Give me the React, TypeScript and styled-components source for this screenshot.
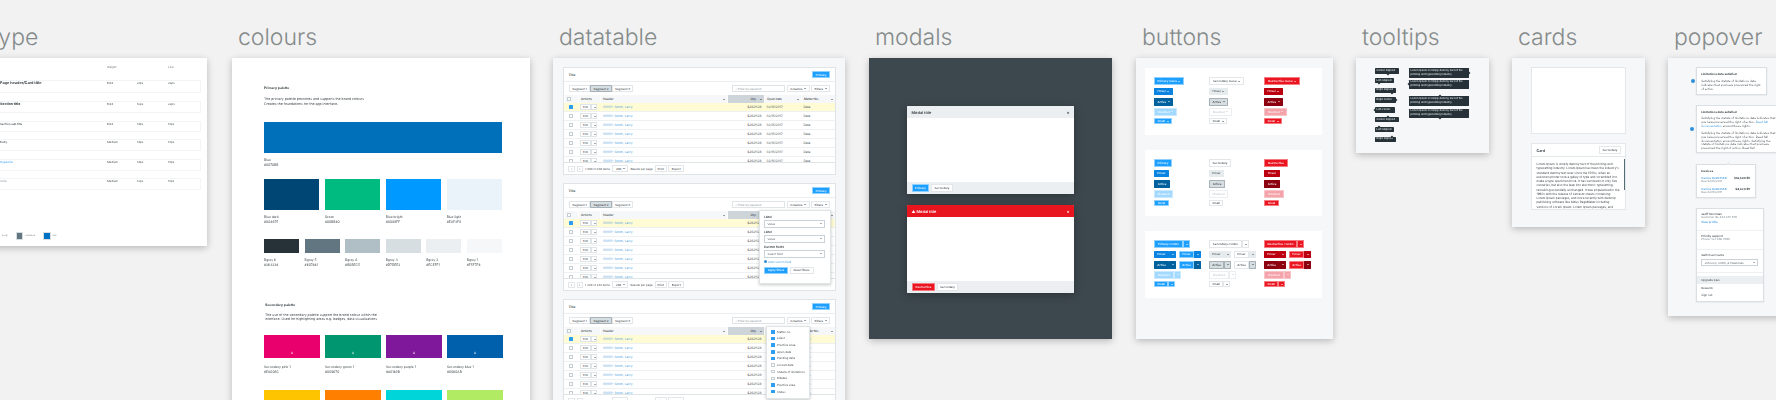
import styled, { createGlobalStyle, css } from "styled-components";

const GlobalStyle = createGlobalStyle`
  html, body {
    margin: 0;
    background: #f2f2f2;
    font-family: Inter, "Liberation Sans", sans-serif;
    text-rendering: geometricPrecision;
  }
  * { box-sizing: border-box; }
`;

const Canvas = styled.div`
  position: relative;
  width: 1776px;
  height: 400px;
  overflow: hidden;
  background: #f2f2f2;
`;

// each artboard sits at its own spot on the design canvas
const Artboard = styled.section<{ $x: number; $w: number }>`
  position: absolute;
  left: ${(p) => p.$x}px;
  top: 0;
  width: ${(p) => p.$w}px;
  display: flex;
  flex-direction: column;
`;

const BoardLabel = styled.h2`
  margin: 0;
  height: 58px;
  padding: 23px 0 0 6px;
  font-size: 23px;
  line-height: 29px;
  font-weight: 300;
  color: #858b8b;
  white-space: nowrap;
`;

const Frame = styled.div<{ $h: number; $bg?: string }>`
  position: relative;
  height: ${(p) => p.$h}px;
  background: ${(p) => p.$bg ?? "#f5f7f8"};
  box-shadow: 0 2px 7px rgba(0, 0, 0, 0.24);
`;

// the reference is a zoomed-out canvas, so everything inside a frame is a bit soft
const Soft = styled.div`
  height: 100%;
  filter: blur(0.25px);
`;

/* ---------- shared bits ---------- */

const tiny = css`
  font-size: 2.9px;
  line-height: 4px;
  color: #40484c;
  white-space: nowrap;
`;

const Caret = styled.i<{ $color?: string }>`
  display: inline-block;
  width: 0;
  height: 0;
  margin-left: 1.5px;
  border-left: 1.2px solid transparent;
  border-right: 1.2px solid transparent;
  border-top: 1.5px solid ${(p) => p.$color ?? "currentColor"};
`;

type Kind = "primary" | "secondary" | "destructive";
type State = "normal" | "hover" | "active" | "disabled";

const palette: Record<Kind, Record<State, [string, string, string]>> = {
  primary: {
    normal: ["#1c9fff", "#ffffff", "#8fd0ff"],
    hover: ["#0a84e0", "#ffffff", "#0a84e0"],
    active: ["#00619f", "#ffffff", "#00619f"],
    disabled: ["#a3d9ff", "#f2faff", "#c9e9ff"],
  },
  secondary: {
    normal: ["#ffffff", "#3f474b", "#e3e7ea"],
    hover: ["#e6ebee", "#3f474b", "#e6ebee"],
    active: ["#d7dee2", "#343c40", "#a7b2b8"],
    disabled: ["#ffffff", "#c5ccd0", "#eceff1"],
  },
  destructive: {
    normal: ["#ea1520", "#ffffff", "#f47a80"],
    hover: ["#bd0010", "#ffffff", "#bd0010"],
    active: ["#8c0010", "#ffffff", "#8c0010"],
    disabled: ["#f3a3a9", "#fff0f0", "#f7c5c8"],
  },
};

const Btn = styled.span<{ $kind: Kind; $state?: State; $w: number; $h?: number }>`
  display: inline-flex;
  flex: none;
  align-items: center;
  justify-content: center;
  width: ${(p) => p.$w}px;
  height: ${(p) => p.$h ?? 7.5}px;
  font-size: 2.9px;
  font-weight: 500;
  white-space: nowrap;
  border-radius: 0.4px;
  background: ${(p) => palette[p.$kind][p.$state ?? "normal"][0]};
  color: ${(p) => palette[p.$kind][p.$state ?? "normal"][1]};
  border: 0.6px solid ${(p) => palette[p.$kind][p.$state ?? "normal"][2]};
`;

/* ---------- type ---------- */

const TypeHead = styled.div`
  display: grid;
  grid-template-columns: 107px 30px 31px 33px;
  padding: 7px 0 0 15px;
  height: 22px;
  & > span {
    ${tiny}
    color: #6c767b;
  }
`;

const TypeRow = styled.div<{ $h: number; $next: number }>`
  display: grid;
  grid-template-columns: 107px 30px 31px 33px;
  width: 216px;
  height: ${(p) => p.$h}px;
  margin-bottom: ${(p) => p.$next - p.$h}px;
  margin-left: -15px;
  padding-left: 15px;
  border: 0.5px solid #f2f4f5;
  border-left: 0;
  & > span {
    ${tiny}
  }
`;

const TypeSample = styled.span<{ $size: number; $weight: number; $color?: string }>`
  font-size: ${(p) => p.$size}px !important;
  font-weight: ${(p) => p.$weight};
  color: ${(p) => p.$color ?? "#30393d"} !important;
`;

const TypeRows = styled.div`
  padding-left: 15px;
  height: 152px;
`;

const Legend = styled.div`
  display: flex;
  align-items: center;
  padding-left: 11px;
  gap: 2px;
`;

const LegendChip = styled.i<{ $color: string; $w?: number; $ml?: number }>`
  width: ${(p) => p.$w ?? 7.5}px;
  height: 7.5px;
  background: ${(p) => p.$color};
  border: 0.5px solid #d7dee2;
  margin-left: ${(p) => p.$ml ?? 6}px;
`;

const LegendText = styled.span`
  ${tiny}
  font-size: 2.4px;
  color: #7d878c;
`;

/* ---------- colours ---------- */

const ColourBody = styled.div`
  padding: 28px 28px 0 32px;
`;

const SectionTitle = styled.h3<{ $mt?: number; $pl?: number }>`
  margin: ${(p) => p.$mt ?? 0}px 0 0 0;
  padding-left: ${(p) => p.$pl ?? 0}px;
  font-size: 3.4px;
  line-height: 4px;
  font-weight: 700;
  color: #30393d;
  white-space: nowrap;
`;

const Blurb = styled.p<{ $mt: number; $pl?: number }>`
  margin: ${(p) => p.$mt}px 0 0 0;
  padding-left: ${(p) => p.$pl ?? 0}px;
  font-size: 3.45px;
  line-height: 4.6px;
  color: #40484c;
  white-space: nowrap;
`;

const Swatches = styled.div<{ $cols: number; $gap: number; $mt: number; $w?: number }>`
  display: grid;
  grid-template-columns: repeat(${(p) => p.$cols}, 1fr);
  column-gap: ${(p) => p.$gap}px;
  margin-top: ${(p) => p.$mt}px;
  width: ${(p) => (p.$w ? `${p.$w}px` : "auto")};
`;

const Chip = styled.div<{ $color: string; $h: number }>`
  display: flex;
  align-items: flex-end;
  justify-content: center;
  height: ${(p) => p.$h}px;
  padding-bottom: 3px;
  background: ${(p) => p.$color};
  font-size: 3px;
  line-height: 4px;
  color: #fff;
`;

const Caption = styled.div<{ $mt: number }>`
  margin-top: ${(p) => p.$mt}px;
  font-size: 3.3px;
  line-height: 5px;
  color: #40484c;
  white-space: nowrap;
`;

function Swatch({ name, hex, color, h, mt, mark }: { name: string; hex: string; color: string; h: number; mt: number; mark?: boolean }) {
  return (
    <div>
      <Chip $color={color} $h={h}>{mark ? "A" : ""}</Chip>
      <Caption $mt={mt}>{name}<br />{hex}</Caption>
    </div>
  );
}

const main = [
  ["Blue dark", "#004675", "#004675"],
  ["Green", "#00BB80", "#00bb80"],
  ["Blue bright", "#0099FF", "#0099ff"],
  ["Blue light", "#EAF3F9", "#eaf3f9"],
];
const greys = [
  ["Bgrey 6", "#263238", "#263238"],
  ["Bgrey 5", "#607881", "#617680"],
  ["Bgrey 4", "#B0BEC5", "#b0bec5"],
  ["Bgrey 3", "#D7DEE2", "#d7dee2"],
  ["Bgrey 2", "#ECEFF1", "#eceff1"],
  ["Bgrey 1", "#F5F7F8", "#f5f7f8"],
];
const secondary = [
  ["Secondary pink 1", "#EA006C", "#ea006c"],
  ["Secondary green 1", "#009670", "#009670"],
  ["Secondary purple 1", "#80189B", "#80189b"],
  ["Secondary blue 1", "#0060AB", "#0060ab"],
];
const secondaryTwo = [
  ["Secondary yellow 1", "#FFC400", "#ffc400"],
  ["Secondary orange 1", "#FF7F00", "#ff7f00"],
  ["Secondary cyan 1", "#00D5D9", "#00d5d9"],
  ["Secondary lime 1", "#B0EB63", "#b0eb63"],
];

/* ---------- datatable ---------- */

const TablePanels = styled.div`
  display: flex;
  flex-direction: column;
  gap: 8px;
  padding: 9px 9px 0 10px;
`;

const Panel = styled.div`
  position: relative;
  height: 108px;
  flex: none;
  background: #fff;
  border: 0.5px solid #dfe4e7;
  display: flex;
  flex-direction: column;
`;

const PanelHead = styled.div`
  display: flex;
  align-items: center;
  justify-content: space-between;
  height: 14px;
  flex: none;
  padding: 0 5px 0 4.5px;
  border-bottom: 0.5px solid #eceff1;
  font-size: 3.2px;
  font-weight: 600;
  color: #30393d;
`;

const Toolbar = styled.div`
  display: flex;
  align-items: center;
  gap: 1.3px;
  height: 13px;
  flex: none;
  padding: 0 5px;
`;

const Segmented = styled.div`
  display: flex;
  gap: 0;
  margin-right: auto;
`;

const SearchBox = styled.div`
  display: flex;
  align-items: center;
  gap: 1px;
  width: 53px;
  height: 7.5px;
  padding: 0 2px;
  border: 0.6px solid #dfe4e7;
  font-size: 2.9px;
  color: #8a959b;
`;

const columns = "14px 22px 127px 37px 37px 1fr";

const TableHeadRow = styled.div`
  display: grid;
  grid-template-columns: ${columns};
  height: 8px;
  flex: none;
  align-items: center;
  background: #f5f7f8;
  font-size: 3px;
  font-weight: 500;
  color: #3f474b;
`;

const HeadCell = styled.div<{ $sorted?: boolean; $right?: boolean }>`
  display: flex;
  align-items: center;
  justify-content: ${(p) => (p.$right ? "flex-end" : "space-between")};
  gap: 2px;
  height: 100%;
  padding: 0 2px;
  border-left: 0.5px solid #fff;
  background: ${(p) => (p.$sorted ? "#cdd5da" : "transparent")};
`;

const TableBody = styled.div`
  flex: 1;
  overflow: hidden;
`;

const TableRow = styled.div<{ $on?: boolean }>`
  display: grid;
  grid-template-columns: ${columns};
  height: 9px;
  align-items: center;
  background: ${(p) => (p.$on ? "#fffbd4" : "#fff")};
  border-bottom: 0.5px solid #eef1f2;
  ${tiny}
  line-height: 8px;
  font-size: 3.15px;
`;

const Tick = styled.i<{ $on?: boolean; $size?: number }>`
  display: block;
  justify-self: center;
  flex: none;
  width: ${(p) => p.$size ?? 4.5}px;
  height: ${(p) => p.$size ?? 4.5}px;
  border-radius: 0.5px;
  background: ${(p) => (p.$on ? "#2f9df0" : "#fff")};
  border: 0.5px solid ${(p) => (p.$on ? "#2f9df0" : "#c3ccd1")};
`;

const Split = styled.div`
  display: flex;
  margin-left: 2px;
`;

const SplitPart = styled.span<{ $w: number }>`
  display: flex;
  align-items: center;
  justify-content: center;
  width: ${(p) => p.$w}px;
  height: 5.5px;
  background: #fff;
  border: 0.5px solid #dfe4e7;
  font-size: 2.8px;
  color: #3f474b;
`;

const LinkCell = styled.span`
  padding-left: 3px;
  color: #3c9ddd;
`;

const Cell = styled.span<{ $right?: boolean }>`
  padding: 0 2.5px;
  text-align: ${(p) => (p.$right ? "right" : "left")};
`;

const TableFooter = styled.div`
  display: flex;
  align-items: center;
  gap: 1.5px;
  height: 12px;
  flex: none;
  padding: 0 4px;
  border-top: 0.5px solid #dfe4e7;
  font-size: 2.8px;
  color: #40484c;
`;

const FooterText = styled.span<{ $mx: number }>`
  margin: 0 ${(p) => p.$mx}px;
  white-space: nowrap;
`;

const Pop = styled.div<{ $right: number; $top: number; $w: number; $h: number; $pad: string }>`
  position: absolute;
  right: ${(p) => p.$right}px;
  top: ${(p) => p.$top}px;
  width: ${(p) => p.$w}px;
  height: ${(p) => p.$h}px;
  padding: ${(p) => p.$pad};
  background: #fff;
  border: 0.5px solid #dfe4e7;
  box-shadow: 0 1px 3px rgba(0, 0, 0, 0.22);
  display: flex;
  flex-direction: column;
`;

const FieldLabel = styled.label`
  font-size: 3px;
  line-height: 4px;
  font-weight: 600;
  color: #30393d;
`;

const Select = styled.div<{ $mb: number }>`
  display: flex;
  align-items: center;
  justify-content: space-between;
  height: 7.5px;
  margin: 1.5px 0 ${(p) => p.$mb}px;
  padding: 0 2.5px;
  border: 0.5px solid #c9d2d7;
  font-size: 2.9px;
  color: #5c666b;
  white-space: nowrap;
`;

const AddLink = styled.span`
  display: flex;
  align-items: center;
  gap: 1px;
  font-size: 2.9px;
  line-height: 4px;
  color: #3c9ddd;
  margin-bottom: 3px;
`;

const Bullet = styled.i`
  width: 3px;
  height: 3px;
  border-radius: 50%;
  background: #2f8fd8;
`;

const PopActions = styled.div`
  display: flex;
  gap: 1.5px;
`;

const ColumnOption = styled.div`
  display: flex;
  align-items: center;
  gap: 2.5px;
  height: 6.65px;
  font-size: 2.9px;
  color: #40484c;
  white-space: nowrap;
`;

const rowIndexes = [0, 1, 2, 3, 4, 5, 6];

function DataPanel({ children }: { children?: React.ReactNode }) {
  return (
    <Panel>
      <PanelHead>
        Title
        <Btn $kind="primary" $w={18}>Primary</Btn>
      </PanelHead>
      <Toolbar>
        <Segmented>
          <Btn $kind="secondary" $w={21}>Segment 1</Btn>
          <Btn $kind="secondary" $state="active" $w={22}>Segment 2</Btn>
          <Btn $kind="secondary" $w={21}>Segment 3</Btn>
        </Segmented>
        <SearchBox>⌕ Filter by keyword</SearchBox>
        <Btn $kind="secondary" $w={23}>Columns<Caret /></Btn>
        <Btn $kind="secondary" $w={19}>Filters<Caret /></Btn>
      </Toolbar>
      <TableHeadRow>
        <HeadCell><Tick $size={4} /></HeadCell>
        <HeadCell>Actions</HeadCell>
        <HeadCell>Header<Caret /></HeadCell>
        <HeadCell $sorted $right>Qty.<Caret /></HeadCell>
        <HeadCell>Open date<Caret /></HeadCell>
        <HeadCell>Matter No.<Caret /></HeadCell>
      </TableHeadRow>
      <TableBody>
        {rowIndexes.map((i) => (
          <TableRow key={i} $on={i === 0}>
            <Tick $on={i === 0} />
            <Split>
              <SplitPart $w={11}>Edit</SplitPart>
              <SplitPart $w={6}><Caret $color="#4b5458" /></SplitPart>
            </Split>
            <LinkCell>00001- Smith, Larry</LinkCell>
            <Cell $right>$2621123</Cell>
            <Cell>02/15/2017</Cell>
            <Cell>Data</Cell>
          </TableRow>
        ))}
      </TableBody>
      <TableFooter>
        <Btn $kind="secondary" $w={7} $h={6}>‹</Btn>
        <Btn $kind="secondary" $w={6} $h={6}>›</Btn>
        <FooterText $mx={1}>1-200 of 238 items</FooterText>
        <Btn $kind="secondary" $w={16} $h={7}>200<Caret /></Btn>
        <FooterText $mx={0.5}>Results per page</FooterText>
        <Btn $kind="secondary" $w={12} $h={7}>Print</Btn>
        <Btn $kind="secondary" $w={16} $h={7}>Export</Btn>
      </TableFooter>
      {children}
    </Panel>
  );
}

const columnOptions: [string, boolean][] = [
  ["Matter no.", true],
  ["Client", true],
  ["Practice Area", true],
  ["Open date", true],
  ["Pending date", true],
  ["Closed date", false],
  ["Statute of limitations", false],
  ["Billable", false],
  ["Practice area", true],
  ["Status", true],
];

/* ---------- modals ---------- */

const ModalStack = styled.div`
  display: flex;
  flex-direction: column;
  align-items: center;
  gap: 11px;
  padding-top: 48px;
`;

const Modal = styled.div`
  display: flex;
  flex-direction: column;
  width: 167px;
  height: 88px;
  background: #fff;
  border-radius: 1px;
  overflow: hidden;
  box-shadow: 0 2px 10px rgba(0, 0, 0, 0.3);
`;

const ModalHead = styled.div<{ $danger?: boolean }>`
  display: flex;
  align-items: center;
  gap: 2px;
  height: 12px;
  padding: 0 4.5px;
  font-size: 3.9px;
  font-weight: 600;
  color: ${(p) => (p.$danger ? "#fff" : "#30393d")};
  background: ${(p) => (p.$danger ? "#e8151f" : "#eceff1")};
`;

const ModalClose = styled.span`
  margin-left: auto;
  font-size: 4px;
  font-weight: 700;
`;

const ModalBody = styled.div`
  flex: 1;
`;

const ModalFoot = styled.div`
  display: flex;
  align-items: center;
  gap: 2px;
  height: 12px;
  padding: 0 5px;
  background: #eceff1;
`;

/* ---------- buttons ---------- */

const ButtonBoard = styled.div`
  display: flex;
  flex-direction: column;
  gap: 15px;
  padding: 10px 11px 0 9px;
`;

const ButtonSheet = styled.div`
  display: grid;
  grid-template-columns: 55px 55px 1fr;
  height: 66.5px;
  padding: 9px 0 0 9px;
  background: #fff;
`;

const ButtonCol = styled.div`
  display: flex;
  flex-direction: column;
  align-items: flex-start;
  gap: 2.5px;
`;

const ComboRow = styled.div`
  display: flex;
  gap: 3px;
`;

const Combo = styled.div`
  display: flex;
`;

const menuRows: [State | undefined, string, number, number][] = [
  [undefined, "menu", 0, 8],
  ["hover", "Hover", 19, 7.5],
  ["active", "Active", 19, 8],
  ["disabled", "Disabled", 23, 7.5],
  [undefined, "Small", 18, 6],
];

const menuWidth: Record<Kind, number> = { primary: 30, secondary: 35, destructive: 36 };
const menuTitle: Record<Kind, string> = { primary: "Primary menu", secondary: "Secondary menu", destructive: "Destructive menu" };

const plainWidths: Record<Kind, number[]> = {
  primary: [18, 15, 16, 19, 15],
  secondary: [22, 15, 16, 19, 14],
  destructive: [24, 16, 16, 20, 15],
};
const plainTitle: Record<Kind, string> = { primary: "Primary", secondary: "Secondary", destructive: "Destructive" };
const comboTitle: Record<Kind, string> = { primary: "Primary combo", secondary: "Secondary combo", destructive: "Destructive combo" };
const comboWidth: Record<Kind, number> = { primary: 29, secondary: 33, destructive: 33 };
const kinds: Kind[] = ["primary", "secondary", "destructive"];

function ComboBtn({ kind, label, w, state, tail, h }: { kind: Kind; label: string; w: number; state?: State; tail?: State; h?: number }) {
  return (
    <Combo>
      <Btn $kind={kind} $state={state} $w={w} $h={h}>{label}</Btn>
      <Btn $kind={kind} $state={tail ?? state} $w={7} $h={h}><Caret /></Btn>
    </Combo>
  );
}

/* ---------- tooltips ---------- */

const TipBoard = styled.div`
  display: flex;
  padding: 10px 0 0 19px;
`;

const TipCol = styled.div<{ $w: number; $gap: number }>`
  display: flex;
  flex-direction: column;
  align-items: flex-start;
  gap: ${(p) => p.$gap}px;
  width: ${(p) => p.$w}px;
`;

type Arrow = "bc" | "bl" | "br" | "r" | "l" | "tc" | "tl" | "tr";

const arrowPlace: Record<Arrow, string> = {
  bc: "left: 50%; bottom: -1px;",
  bl: "left: 3px; bottom: -1px;",
  br: "right: 3px; bottom: -1px;",
  r: "right: -1px; top: calc(50% - 1px);",
  l: "left: -1px; top: calc(50% - 1px);",
  tc: "left: 50%; top: -1px;",
  tl: "left: 3px; top: -1px;",
  tr: "right: 3px; top: -1px;",
};

const Tip = styled.div<{ $arrow: Arrow; $w: number; $h: number; $mt?: number }>`
  position: relative;
  width: ${(p) => p.$w}px;
  height: ${(p) => p.$h}px;
  margin-top: ${(p) => p.$mt ?? 0}px;
  padding: 0.8px 1.5px;
  background: #263238;
  border-radius: 0.4px;
  color: #f2f5f6;
  font-size: 2.7px;
  line-height: 3.9px;
  white-space: nowrap;
  &::after {
    content: "";
    position: absolute;
    width: 2px;
    height: 2px;
    background: #263238;
    transform: rotate(45deg);
    ${(p) => arrowPlace[p.$arrow]}
  }
`;

const shortTips: [string, Arrow, number][] = [
  ["Center aligned", "bc", 24],
  ["Left aligned", "bl", 19],
  ["Right aligned", "br", 21],
  ["Right center", "r", 21],
  ["Left center", "l", 20],
  ["Center aligned", "tc", 24],
  ["Left aligned", "tl", 19],
  ["Right aligned", "tr", 21],
];

const lorem = "Lorem Ipsum is simply dummy text of the";
const lorem2 = "printing and typesetting industry.";

/* ---------- cards ---------- */

const CardStack = styled.div`
  display: flex;
  flex-direction: column;
  gap: 9px;
  padding: 9px 19px 0;
`;

const Card = styled.div<{ $h: number }>`
  position: relative;
  display: flex;
  flex-direction: column;
  height: ${(p) => p.$h}px;
  background: #fff;
  border: 0.5px solid #e3e8ea;
  overflow: hidden;
`;

const CardHead = styled.div`
  display: flex;
  flex: none;
  align-items: center;
  justify-content: space-between;
  height: 13px;
  padding: 0 4px 0 4.5px;
  border-bottom: 0.5px solid #e3e8ea;
  font-size: 3.7px;
  font-weight: 600;
  color: #30393d;
`;

const CardText = styled.p`
  margin: 0;
  padding: 5px 5px 0 4.5px;
  font-size: 3px;
  line-height: 4.25px;
  color: #353d41;
`;

const ScrollThumb = styled.i`
  position: absolute;
  right: 0.2px;
  top: 15px;
  width: 1.2px;
  height: 31px;
  background: #566a74;
`;

/* ---------- popovers ---------- */

const PopStack = styled.div`
  display: flex;
  flex-direction: column;
  align-items: flex-start;
  gap: 10.3px;
  padding: 9px 0 0 27.7px;
`;

const PopCard = styled.div<{ $w: number; $h: number }>`
  position: relative;
  width: ${(p) => p.$w}px;
  height: ${(p) => p.$h}px;
  background: #fff;
  border: 0.6px solid #d9dfe3;
  box-shadow: 0 0.5px 1.5px rgba(0, 0, 0, 0.12);
`;

const PopInner = styled.div<{ $h?: number }>`
  height: ${(p) => (p.$h ? `${p.$h}px` : "auto")};
  overflow: hidden;
  padding: 4px 4.5px 0;
`;

const PopTitle = styled.div<{ $mb?: number; $weight?: number }>`
  font-size: 2.9px;
  line-height: 4px;
  font-weight: ${(p) => p.$weight ?? 700};
  color: #30393d;
  margin-bottom: ${(p) => p.$mb ?? 0}px;
  white-space: nowrap;
`;

const PopText = styled.p<{ $w: number; $mb?: number }>`
  margin: 0 0 ${(p) => p.$mb ?? 0}px;
  width: ${(p) => p.$w}px;
  font-size: 2.95px;
  line-height: 3.75px;
  color: #40484c;
`;

const InlineLink = styled.span`
  color: #2f8fd8;
`;

const Dot = styled.i<{ $left: number }>`
  position: absolute;
  left: ${(p) => p.$left}px;
  top: calc(50% - 2px);
  width: 4px;
  height: 4px;
  border-radius: 50%;
  background: #2f8fd8;
`;

const PopNotch = styled.i`
  position: absolute;
  left: 30px;
  top: -1.2px;
  width: 2.4px;
  height: 2.4px;
  background: #fff;
  border-left: 0.5px solid #d9dfe3;
  border-top: 0.5px solid #d9dfe3;
  transform: rotate(45deg);
`;

const InvoiceRow = styled.div`
  display: flex;
  justify-content: space-between;
  padding-top: 3px;
`;

const InvoiceLink = styled.div`
  font-size: 2.9px;
  line-height: 4px;
  font-weight: 500;
  color: #2f8fd8;
`;

const Muted = styled.div`
  font-size: 2.85px;
  line-height: 3.9px;
  color: #7d878c;
`;

const Amount = styled.span`
  font-size: 2.9px;
  line-height: 4px;
  font-weight: 700;
  color: #30393d;
`;

const PopSection = styled.div<{ $h: number }>`
  height: ${(p) => p.$h}px;
  padding: 3.5px 4.5px 0;
  border-bottom: 0.5px solid #eef1f2;
`;

const MenuItem = styled.div<{ $on?: boolean }>`
  height: 7.6px;
  padding: 0 4.5px;
  display: flex;
  align-items: center;
  font-size: 2.9px;
  color: #353d41;
  background: ${(p) => (p.$on ? "#eceff1" : "transparent")};
`;

const MenuList = styled.div`
  padding-top: 3.6px;
`;

/* ---------- page ---------- */

const satis = "Satisfying the statute of limitations data indicates that you have preserved the right of action.";

export default function App() {
  return (
    <Canvas>
      <GlobalStyle />

      <Artboard $x={-15} $w={222}>
        <BoardLabel>type</BoardLabel>
        <Frame $h={188} $bg="#fff">
          <Soft>
            <TypeHead><span /><span>Weight</span><span /><span>Line</span></TypeHead>
            <TypeRows>
              <TypeRow $h={13} $next={21}><TypeSample $size={3.8} $weight={700}>Page header/Card title</TypeSample><span>Bold</span><span>21px</span><span>26px</span></TypeRow>
              <TypeRow $h={12} $next={20}><TypeSample $size={3.5} $weight={700}>Section title</TypeSample><span>Bold</span><span>16px</span><span>22px</span></TypeRow>
              <TypeRow $h={11} $next={18}><TypeSample $size={2.9} $weight={500}>Section sub title</TypeSample><span>Bold</span><span>14px</span><span>18px</span></TypeRow>
              <TypeRow $h={12} $next={20}><TypeSample $size={2.9} $weight={400}>Body</TypeSample><span>Medium</span><span>14px</span><span>18px</span></TypeRow>
              <TypeRow $h={12} $next={19}><TypeSample $size={2.9} $weight={400} $color="#2f9df0">Hyperlink</TypeSample><span>Medium</span><span>14px</span><span>18px</span></TypeRow>
              <TypeRow $h={12} $next={19}><TypeSample $size={2.6} $weight={400} $color="#8a959b">Small</TypeSample><span>Medium</span><span>12px</span><span>18px</span></TypeRow>
            </TypeRows>
            <Legend>
              <LegendChip $color="#fff" $w={4} $ml={0} />
              <LegendText>body</LegendText>
              <LegendChip $color="#617680" />
              <LegendText>subdued</LegendText>
              <LegendChip $color="#0073c4" />
              <LegendText>link</LegendText>
            </Legend>
          </Soft>
        </Frame>
      </Artboard>

      <Artboard $x={232} $w={298}>
        <BoardLabel>colours</BoardLabel>
        <Frame $h={500} $bg="#fff">
          <Soft>
            <ColourBody>
              <SectionTitle>Primary palette</SectionTitle>
              <Blurb $mt={7}>The primary palette promotes and supports the brand colours<br />Creates the foundations for the app interface.</Blurb>
              <Swatches $cols={1} $gap={0} $mt={16}>
                <Swatch name="Blue" hex="#0070BB" color="#0070bb" h={30.5} mt={5} />
              </Swatches>
              <Swatches $cols={4} $gap={5.5} $mt={11}>
                {main.map(([n, x, c]) => <Swatch key={n} name={n} hex={x} color={c} h={31} mt={5} />)}
              </Swatches>
              <Swatches $cols={6} $gap={5.3} $mt={14}>
                {greys.map(([n, x, c]) => <Swatch key={n} name={n} hex={x} color={c} h={14} mt={5} />)}
              </Swatches>
              <SectionTitle $mt={35} $pl={1}>Secondary palette</SectionTitle>
              <Blurb $mt={6} $pl={1}>The use of the secondary palette support the brand colour within the<br />interface. Used for highlighting areas e.g. badges, data visualisations</Blurb>
              <Swatches $cols={4} $gap={5} $mt={13} $w={239}>
                {secondary.map(([n, x, c]) => <Swatch key={n} name={n} hex={x} color={c} h={23} mt={7} mark />)}
              </Swatches>
              <Swatches $cols={4} $gap={5} $mt={15} $w={239}>
                {secondaryTwo.map(([n, x, c]) => <Swatch key={n} name={n} hex={x} color={c} h={23} mt={7} />)}
              </Swatches>
            </ColourBody>
          </Soft>
        </Frame>
      </Artboard>

      <Artboard $x={553} $w={292}>
        <BoardLabel>datatable</BoardLabel>
        <Frame $h={400}>
          <Soft>
            <TablePanels>
              <DataPanel />
              <DataPanel>
                <Pop $right={4.5} $top={25.5} $w={72} $h={74} $pad="4px 4.5px">
                  <FieldLabel>Label</FieldLabel>
                  <Select $mb={2}>Value<Caret /></Select>
                  <FieldLabel>Label</FieldLabel>
                  <Select $mb={2}>Value<Caret /></Select>
                  <FieldLabel>Custom fields</FieldLabel>
                  <Select $mb={2}>Select field<Caret /></Select>
                  <AddLink><Bullet />Add custom field</AddLink>
                  <PopActions>
                    <Btn $kind="primary" $w={24}>Apply filters</Btn>
                    <Btn $kind="secondary" $w={24}>Clear filters</Btn>
                  </PopActions>
                </Pop>
              </DataPanel>
              <DataPanel>
                <Pop $right={25.5} $top={25.5} $w={43.5} $h={73.5} $pad="2px 4px">
                  {columnOptions.map(([name, on]) => (
                    <ColumnOption key={name}><Tick $on={on} $size={3.6} />{name}</ColumnOption>
                  ))}
                </Pop>
              </DataPanel>
            </TablePanels>
          </Soft>
        </Frame>
      </Artboard>

      <Artboard $x={869} $w={243}>
        <BoardLabel>modals</BoardLabel>
        <Frame $h={281} $bg="#3d484e">
          <Soft>
            <ModalStack>
              <Modal>
                <ModalHead>Modal title<ModalClose>×</ModalClose></ModalHead>
                <ModalBody />
                <ModalFoot>
                  <Btn $kind="primary" $w={17}>Primary</Btn>
                  <Btn $kind="secondary" $w={22}>Secondary</Btn>
                </ModalFoot>
              </Modal>
              <Modal>
                <ModalHead $danger>▲ Modal title<ModalClose>×</ModalClose></ModalHead>
                <ModalBody />
                <ModalFoot>
                  <Btn $kind="destructive" $w={23}>Destructive</Btn>
                  <Btn $kind="secondary" $w={21}>Secondary</Btn>
                </ModalFoot>
              </Modal>
            </ModalStack>
          </Soft>
        </Frame>
      </Artboard>

      <Artboard $x={1136} $w={197}>
        <BoardLabel>buttons</BoardLabel>
        <Frame $h={281}>
          <Soft>
            <ButtonBoard>
              <ButtonSheet>
                {kinds.map((k) => (
                  <ButtonCol key={k}>
                    {menuRows.map(([state, label, w, h], i) => (
                      <Btn key={i} $kind={k} $state={state} $w={i === 0 ? menuWidth[k] : w} $h={h}>
                        {i === 0 ? menuTitle[k] : label}<Caret />
                      </Btn>
                    ))}
                  </ButtonCol>
                ))}
              </ButtonSheet>
              <ButtonSheet>
                {kinds.map((k) => (
                  <ButtonCol key={k}>
                    <Btn $kind={k} $w={plainWidths[k][0]} $h={8.5}>{plainTitle[k]}</Btn>
                    <Btn $kind={k} $state="hover" $w={plainWidths[k][1]}>Hover</Btn>
                    <Btn $kind={k} $state="active" $w={plainWidths[k][2]} $h={8}>Active</Btn>
                    <Btn $kind={k} $state="disabled" $w={plainWidths[k][3]}>Disabled</Btn>
                    <Btn $kind={k} $w={plainWidths[k][4]} $h={6}>Small</Btn>
                  </ButtonCol>
                ))}
              </ButtonSheet>
              <ButtonSheet>
                {kinds.map((k) => (
                  <ButtonCol key={k}>
                    <ComboBtn kind={k} label={comboTitle[k]} w={comboWidth[k]} h={8} />
                    <ComboRow>
                      <ComboBtn kind={k} label="Hover" w={15} state="hover" />
                      <ComboBtn kind={k} label="Hover" w={15} tail="hover" />
                    </ComboRow>
                    <ComboRow>
                      <ComboBtn kind={k} label="Active" w={15} state="active" h={8} />
                      <ComboBtn kind={k} label="Active" w={15} tail="active" h={8} />
                    </ComboRow>
                    <ComboBtn kind={k} label="Disabled" w={20} state="disabled" />
                    <ComboBtn kind={k} label="Small" w={14} h={6} />
                  </ButtonCol>
                ))}
              </ButtonSheet>
            </ButtonBoard>
          </Soft>
        </Frame>
      </Artboard>

      <Artboard $x={1356} $w={133}>
        <BoardLabel>tooltips</BoardLabel>
        <Frame $h={95}>
          <Soft>
            <TipBoard>
              <TipCol $w={34} $gap={4.3}>
                {shortTips.map(([t, a, w], i) => <Tip key={i} $arrow={a} $w={w} $h={5.5}>{t}</Tip>)}
              </TipCol>
              <TipCol $w={60} $gap={2}>
                <Tip $arrow="r" $w={60} $h={9.5}>{lorem}<br />{lorem2}</Tip>
                <Tip $arrow="l" $w={60} $h={9.5}>{lorem}<br />{lorem2}</Tip>
                <Tip $arrow="tc" $w={60} $h={9.5} $mt={5}>{lorem}<br />{lorem2}</Tip>
                <Tip $arrow="bc" $w={60} $h={9.5} $mt={1}>{lorem}<br />{lorem2}</Tip>
              </TipCol>
            </TipBoard>
          </Soft>
        </Frame>
      </Artboard>

      <Artboard $x={1512} $w={133}>
        <BoardLabel>cards</BoardLabel>
        <Frame $h={169}>
          <Soft>
            <CardStack>
              <Card $h={67} />
              <Card $h={66.5}>
                <CardHead>
                  Card
                  <Btn $kind="secondary" $w={22}>Secondary</Btn>
                </CardHead>
                <CardText>
                  Lorem Ipsum is simply dummy text of the printing and typesetting industry. Lorem Ipsum has been the industry's standard dummy text ever since the 1500s, when an unknown printer took a galley of type and scrambled it to make a type specimen book. It has survived not only five centuries, but also the leap into electronic typesetting, remaining essentially unchanged. It was popularised in the 1960s with the release of Letraset sheets containing Lorem Ipsum passages, and more recently with desktop publishing software like Aldus PageMaker including versions of Lorem Ipsum. Lorem Ipsum passages, and
                </CardText>
                <ScrollThumb />
              </Card>
            </CardStack>
          </Soft>
        </Frame>
      </Artboard>

      <Artboard $x={1668} $w={130}>
        <BoardLabel>popover</BoardLabel>
        <Frame $h={258}>
          <Soft>
            <PopStack>
              <PopCard $w={71} $h={28}>
                <Dot $left={-5.5} />
                <PopInner>
                  <PopTitle $mb={4}>Limitations data satisfied</PopTitle>
                  <PopText $w={60}>{satis}</PopText>
                </PopInner>
              </PopCard>
              <PopCard $w={100} $h={48}>
                <Dot $left={-7} />
                <PopInner $h={47}>
                  <PopTitle $mb={3}>Limitations data satisfied</PopTitle>
                  <PopText $w={76} $mb={3.5}>{satis} <InlineLink>Read full documentation</InlineLink> around these rights.</PopText>
                  <PopText $w={76}>{satis} Read full documentation around these rights. Satisfying the statute of limitations data indicates that you have preserved the right of action. Read full</PopText>
                </PopInner>
              </PopCard>
              <PopCard $w={60} $h={34}>
                <PopNotch />
                <PopInner>
                  <PopTitle>Invoices</PopTitle>
                  <InvoiceRow>
                    <div><InvoiceLink>Invoice #J2K3S5R</InvoiceLink><Muted>Due 02/10/2017</Muted></div>
                    <Amount>$14,600.95</Amount>
                  </InvoiceRow>
                  <InvoiceRow>
                    <div><InvoiceLink>Invoice #J2K3S5R</InvoiceLink><Muted>Due 02/10/2017</Muted></div>
                    <Amount>$4,620.95</Amount>
                  </InvoiceRow>
                </PopInner>
              </PopCard>
              <PopCard $w={68} $h={94}>
                <PopSection $h={22}>
                  <PopTitle $weight={500}>Jeoff Noorman</PopTitle>
                  <Muted>Customer ID: 444 278 579</Muted>
                  <InvoiceLink>View profile</InvoiceLink>
                </PopSection>
                <PopSection $h={19}>
                  <PopTitle $weight={500}>Priority support</PopTitle>
                  <Muted>Phone: 123 456 7890</Muted>
                </PopSection>
                <PopSection $h={23}>
                  <PopTitle $weight={500}>Switch accounts</PopTitle>
                  <Select $mb={0}>Johnson, Smith, &amp; Hawkman<Caret /></Select>
                </PopSection>
                <MenuList>
                  <MenuItem $on>Upgrade plan</MenuItem>
                  <MenuItem>Rewards</MenuItem>
                  <MenuItem>Sign out</MenuItem>
                </MenuList>
              </PopCard>
            </PopStack>
          </Soft>
        </Frame>
      </Artboard>
    </Canvas>
  );
}
